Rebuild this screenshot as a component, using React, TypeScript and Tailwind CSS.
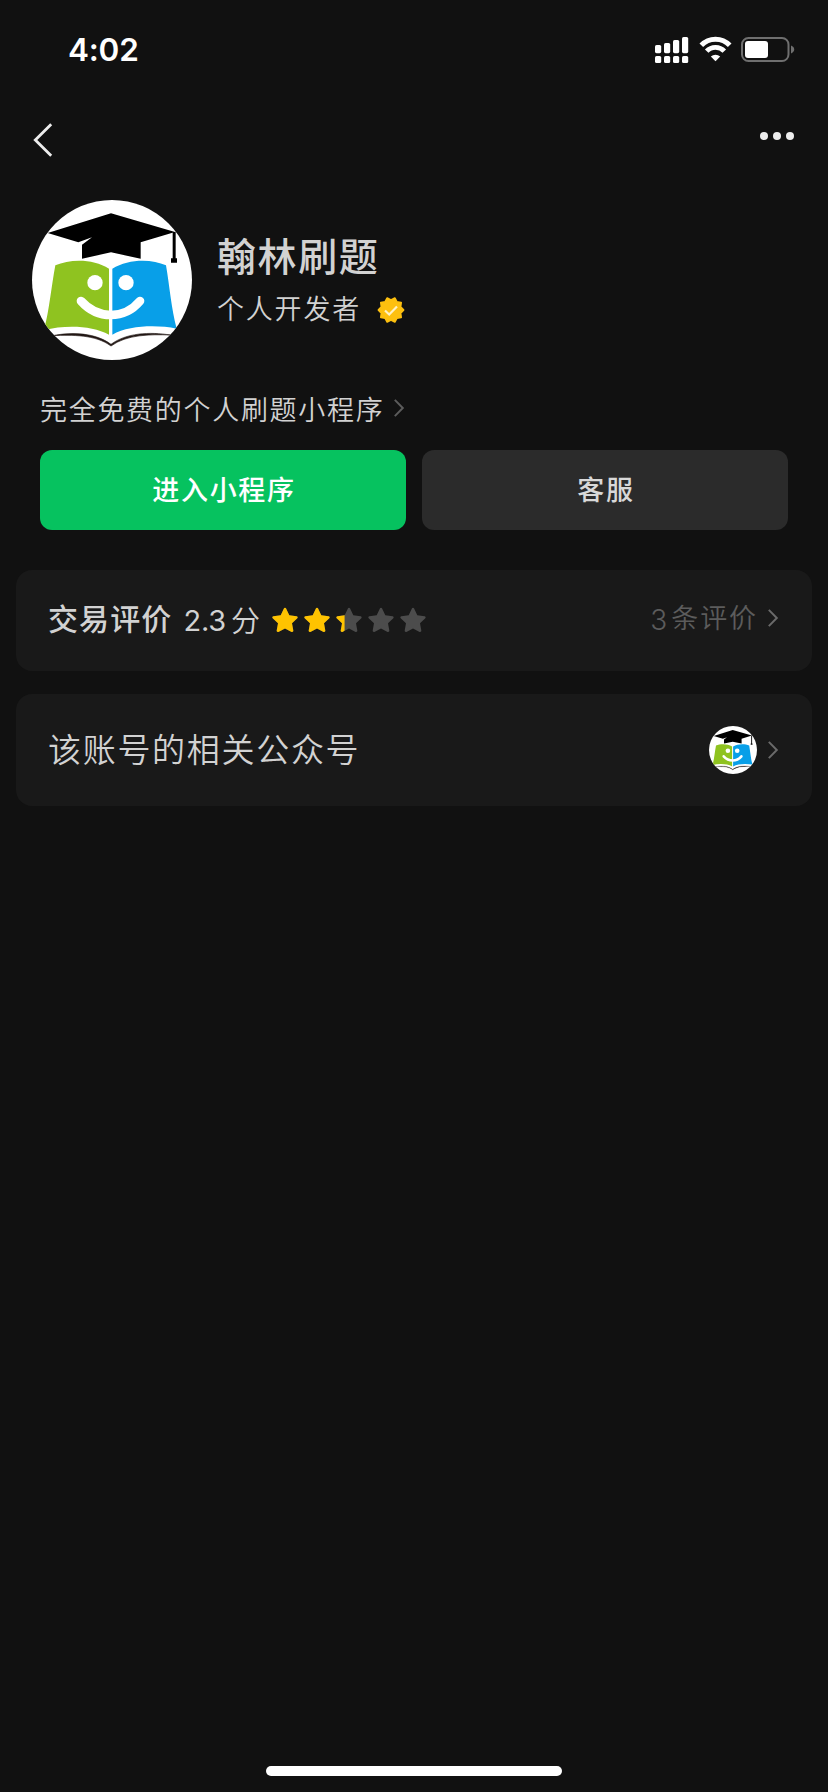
import { clsx } from 'clsx';

const STAR_PATH =
  'M13 .8c.5 0 .9.3 1.1.7l3.2 6.7 7.3 1c1 .2 1.4 1.3.7 2l-5.3 5.1 1.3 7.3c.2 1-.8 1.7-1.7 1.3L13 21.400l-6.6 3.5c-.9.4-1.9-.3-1.7-1.3L6 16.3.7 11.2c-.7-.7-.3-1.8.7-2l7.3-1 3.2-6.7c.2-.4.6-.7 1.1-.7z';

// ten rounded teeth, two of them straddling the top
const BADGE_POINTS = Array.from({ length: 20 }, (_, i) => {
  const r = i % 2 === 0 ? 10 : 12.5;
  const a = (i * Math.PI) / 10 - Math.PI / 2;
  return `${(r * Math.cos(a)).toFixed(2)},${(r * Math.sin(a)).toFixed(2)}`;
}).join(' ');

function StatusBar() {
  return (
    <div className="flex h-[100px] items-start justify-between pl-[68px] pr-[33px]">
      <span className="mt-[30px] font-['Inter'] text-[31.5px] font-semibold leading-[40px] tracking-[-0.2px] text-white">
        4:02
      </span>
      <div className="mt-[36px] flex">
        <svg className="h-[28px] w-[34px]" viewBox="0 0 34 28" fill="#fff">
          <rect x="0" y="9" width="6.2" height="8.2" rx="1.6" />
          <rect x="9" y="7" width="6.2" height="10.2" rx="1.6" />
          <rect x="18" y="4" width="6.2" height="13.2" rx="1.6" />
          <rect x="27" y="1" width="6.2" height="16.2" rx="1.6" />
          <rect x="0" y="20" width="6.2" height="7" rx="1.6" />
          <rect x="9" y="20" width="6.2" height="7" rx="1.6" />
          <rect x="18" y="20" width="6.2" height="7" rx="1.6" />
          <rect x="27" y="20" width="6.2" height="7" rx="1.6" />
        </svg>
        <svg className="ml-[10px] h-[28px] w-[34px]" viewBox="0 0 34 28" fill="none">
          <path d="M2.3 9.3a19.5 19.5 0 0 1 28.4 0" stroke="#fff" strokeWidth="5" />
          <path d="M7.7 15.2a12 12 0 0 1 17.6 0" stroke="#fff" strokeWidth="4.8" />
          <path d="M16.5 25.3l-4.7-4.8a7 7 0 0 1 9.4 0z" fill="#fff" />
        </svg>
        <svg className="ml-[8px] h-[28px] w-[54px]" viewBox="0 0 54 28" fill="none">
          <rect x="1" y="2" width="46.5" height="23" rx="6.5" stroke="#6f6f6f" strokeWidth="2" />
          <rect x="4" y="5" width="23" height="17" rx="3" fill="#fff" />
          <path d="M50 9.5c2 .8 3.2 2.2 3.2 4s-1.2 3.2-3.2 4z" fill="#6f6f6f" />
        </svg>
      </div>
    </div>
  );
}

function NavBar() {
  return (
    <div className="flex h-[100px] items-start justify-between pl-[32px] pr-[34px]">
      <svg className="mt-[20px] h-[40px] w-[24px]" viewBox="0 0 24 40" fill="none">
        <path d="M19.2 4.3L3.3 20l15.9 15.7" stroke="#ededed" strokeWidth="2.8" />
      </svg>
      <div className="mt-[32px] flex gap-[5px]">
        <span className="size-2 rounded-full bg-[#ededed]" />
        <span className="size-2 rounded-full bg-[#ededed]" />
        <span className="size-2 rounded-full bg-[#ededed]" />
      </div>
    </div>
  );
}

function Logo({ className }: { className?: string }) {
  return (
    <svg className={clsx('shrink-0 rounded-full bg-white', className)} viewBox="36 30 480 480">
      {/* cap */}
      <path d="M83 129L273 70l192 56-103 31v49l-89-19-87 19v-42l30-22-41 15z" fill="#000" />
      <path d="M458 126h9v79h4v13h-18v-13h5z" fill="#000" />
      {/* book */}
      <path d="M106 226c45-20 115-20 161 10v198c-50-28-130-30-195-14 16-60 22-130 34-194z" fill="#8fc320" />
      <path d="M277 236c48-30 118-30 161-10 11 64 16 130 32 190-60-12-143-10-193 18z" fill="#089fe8" />
      <path
        d="M98 437c60-12 130-8 175 26 45-34 115-38 178-28-60-2-130-2-178 33-48-35-115-33-175-31z"
        fill="#231815"
        stroke="#231815"
        strokeWidth="2"
      />
      {/* face */}
      <circle cx="225" cy="278" r="23" fill="#fff" />
      <circle cx="318" cy="278" r="23" fill="#fff" />
      <path d="M183 333c50 56 130 56 177 0" fill="none" stroke="#fff" strokeWidth="26" strokeLinecap="round" />
    </svg>
  );
}

function VerifiedBadge() {
  return (
    <svg className="ml-[16px] size-[28px]" viewBox="-14 -14 28 28">
      <polygon points={BADGE_POINTS} fill="#fdc00f" stroke="#fdc00f" strokeWidth="1.8" strokeLinejoin="round" />
      <path d="M-6 .5l4.2 4L6-3.6" fill="none" stroke="#fff2c4" strokeWidth="2.2" />
    </svg>
  );
}

function Chevron({ className }: { className?: string }) {
  return (
    <svg className={clsx('h-[20px] w-[12px] shrink-0', className)} viewBox="0 0 12 20" fill="none">
      <path d="M1.8 1.9L9.8 10l-8 8.1" stroke="currentColor" strokeWidth="2" />
    </svg>
  );
}

function Stars({ score }: { score: number }) {
  return (
    <div className="flex gap-[6px]">
      {[0, 1, 2, 3, 4].map((i) => {
        const fill = Math.max(0, Math.min(1, score - i));
        return (
          <svg key={i} className="size-[26px]" viewBox="0 0 26 26">
            <defs>
              <clipPath id={`star-${i}`}>
                <rect width={fill * 26} height="26" />
              </clipPath>
            </defs>
            <path d={STAR_PATH} fill="#4c4c4c" />
            <path d={STAR_PATH} fill="#ffc300" clipPath={`url(#star-${i})`} />
          </svg>
        );
      })}
    </div>
  );
}

export default function App() {
  return (
    <div className="flex h-[1792px] w-[828px] flex-col bg-[#111111] font-['Inter','Noto_Sans_CJK_SC',sans-serif] text-[#d2d2d2]">
      <StatusBar />
      <NavBar />

      <div className="flex h-[160px] pl-[32px]">
        <Logo className="size-[160px]" />
        <div className="ml-[25px] pt-[32px]">
          <h1 className="text-[39px] font-medium leading-[50px] tracking-[1.6px]">翰林刷题</h1>
          <div className="mt-[9px] flex items-center">
            <span className="text-[27px] font-[350] leading-[38px] tracking-[1.8px]">个人开发者</span>
            <VerifiedBadge />
          </div>
        </div>
      </div>

      <div className="mt-[30px] flex h-[40px] items-center pl-[40px]">
        <span className="pt-[2px] text-[27px] font-[350] leading-[40px] tracking-[1.7px]">
          完全免费的个人刷题小程序
        </span>
        <Chevron className="mb-[5px] ml-[9px] text-[#5c5c5c]" />
      </div>

      <div className="mt-[20px] grid grid-cols-2 gap-[16px] px-[40px]">
        <button className="h-[80px] rounded-[12px] bg-[#06c25f] pl-[2px] pt-[2px] text-[27px] font-medium tracking-[1.7px] text-white">
          进入小程序
        </button>
        <button className="h-[80px] rounded-[12px] bg-[#2b2b2b] pl-[2px] pt-[2px] text-[27px] font-medium tracking-[1.7px] text-[#d8d8d8]">
          客服
        </button>
      </div>

      <section className="mx-[16px] mt-[40px] flex h-[101px] items-center rounded-[16px] bg-[#191919] pl-[32px] pr-[33px]">
        <span className="pb-[2px] text-[30px] font-medium tracking-[1.1px]">交易评价</span>
        <span className="ml-[11px] flex items-center">
          <span className="text-[29px] tracking-[-0.2px]">2.3</span>
          <span className="ml-[5px] pt-[2px] text-[29px] font-[350]">分</span>
        </span>
        <div className="ml-[12px] pb-[2px]">
          <Stars score={2.33} />
        </div>
        <span className="ml-auto flex items-center pb-[2px] text-[#5c5c5c]">
          <span className="text-[28px] font-light">3</span>
          <span className="ml-[4px] text-[27px] font-[350] tracking-[1.9px]">条评价</span>
        </span>
        <Chevron className="mb-[5px] ml-[9px] text-[#6a6a6a]" />
      </section>

      <section className="mx-[16px] mt-[23px] flex h-[112px] items-center rounded-[16px] bg-[#191919] pl-[32px] pr-[33px]">
        <span className="pt-[2px] text-[33px] font-[350] tracking-[1.7px]">该账号的相关公众号</span>
        <Logo className="ml-auto size-[48px]" />
        <Chevron className="ml-[10px] text-[#6a6a6a]" />
      </section>

      <div className="mx-auto mb-[16px] mt-auto h-[10px] w-[296px] rounded-full bg-white" />
    </div>
  );
}
